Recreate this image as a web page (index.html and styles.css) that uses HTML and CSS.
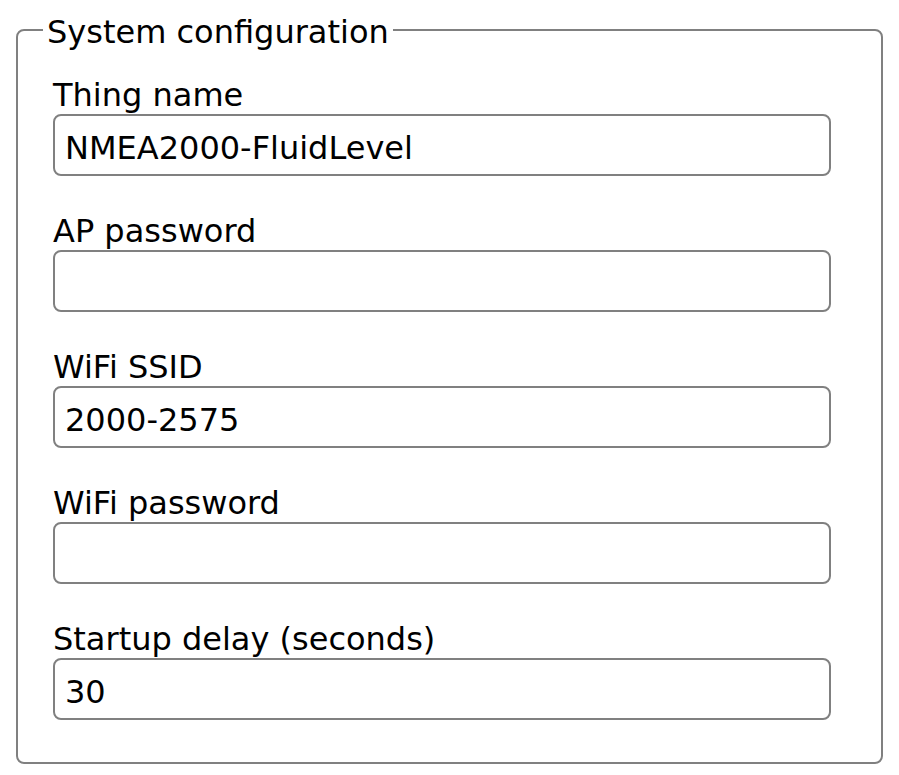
FILE: index.html
```html
<!DOCTYPE html>
<html>
<head>
<meta charset="utf-8">
<title>System configuration</title>
<link rel="stylesheet" href="styles.css">
</head>
<body>
<form class="config">
  <fieldset class="group">
    <legend class="group-title">System configuration</legend>
    <div class="field">
      <label class="field-label" for="thing">Thing name</label>
      <input class="field-input" type="text" id="thing" value="NMEA2000-FluidLevel">
    </div>
    <div class="field">
      <label class="field-label" for="appass">AP password</label>
      <input class="field-input" type="password" id="appass" value="">
    </div>
    <div class="field">
      <label class="field-label" for="ssid">WiFi SSID</label>
      <input class="field-input" type="text" id="ssid" value="2000-2575">
    </div>
    <div class="field">
      <label class="field-label" for="wifipass">WiFi password</label>
      <input class="field-input" type="password" id="wifipass" value="">
    </div>
    <div class="field">
      <label class="field-label" for="delay">Startup delay (seconds)</label>
      <input class="field-input" type="text" id="delay" value="30">
    </div>
  </fieldset>
</form>
</body>
</html>
```

FILE: styles.css
```css
html, body {
  background: #ffffff;
}

body {
  margin: 16px;
  font-family: "DejaVu Sans", Verdana, sans-serif;
  font-size: 32px;
  color: #000000;
}

.config {
  margin: 0;
}

.group {
  margin: 0;
  border: 2px solid #808080;
  border-radius: 8px;
  padding: 20px 24px 18px 25px;
  min-width: 0;
}

.group-title {
  padding: 4px 4px 0 4px;
  line-height: 24px;
  font-size: 32px;
}

.field {
  padding: 10px;
}

.field-label {
  display: block;
  padding-top: 3px;
  line-height: 37px;
}

.field-input {
  display: block;
  box-sizing: border-box;
  width: 778px;
  height: 62px;
  margin: 0 0 14px 0;
  padding: 5px 10px 0 10px;
  border: 2px solid #808080;
  border-radius: 8px;
  background: #ffffff;
  font-family: "DejaVu Sans", Verdana, sans-serif;
  font-size: 32px;
  color: #000000;
  outline: none;
}
```
